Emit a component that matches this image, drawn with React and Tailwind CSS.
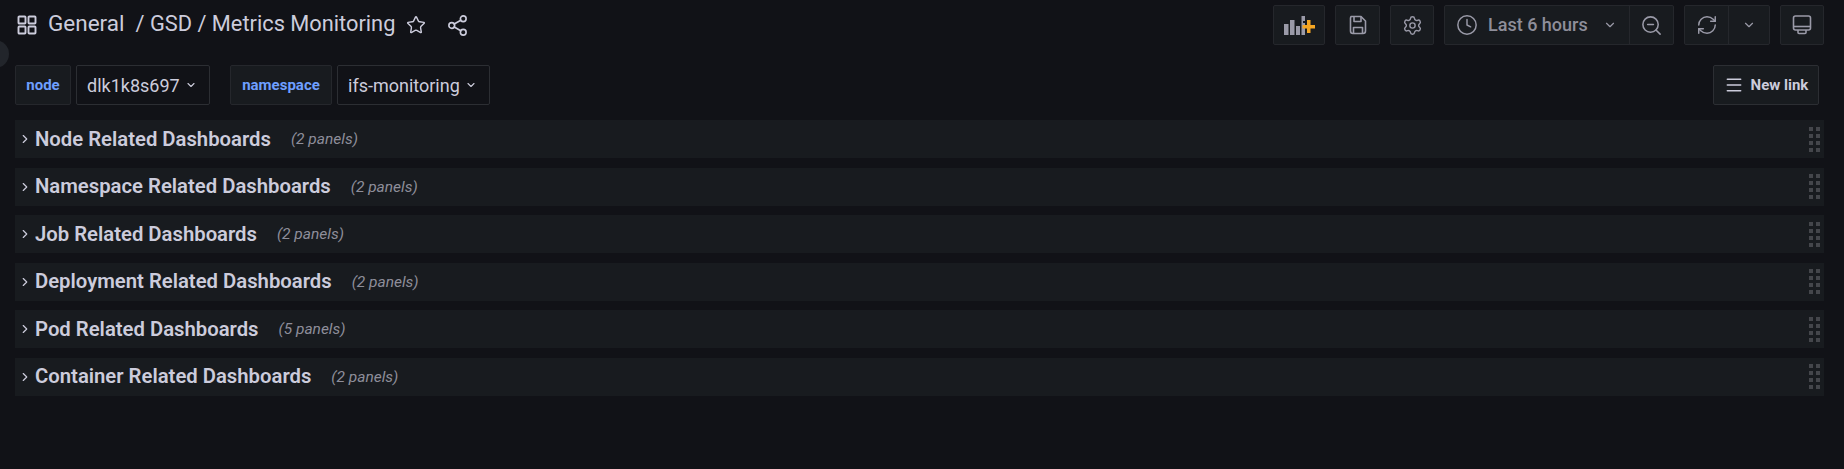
import React from 'react';
import { Star, Share2, Settings, Clock, ChevronDown, ChevronRight, ZoomOut, RefreshCw, Menu } from 'lucide-react';

const rows = [
  { title: 'Node Related Dashboards', panels: '(2 panels)' },
  { title: 'Namespace Related Dashboards', panels: '(2 panels)' },
  { title: 'Job Related Dashboards', panels: '(2 panels)' },
  { title: 'Deployment Related Dashboards', panels: '(2 panels)' },
  { title: 'Pod Related Dashboards', panels: '(5 panels)' },
  { title: 'Container Related Dashboards', panels: '(2 panels)' },
];

function GridIcon() {
  return (
    <svg width="20" height="20" viewBox="0 0 20 20" fill="none" stroke="#ccccdc" strokeWidth="1.9">
      <rect x="1.5" y="1.5" width="7" height="7" rx="0.8" />
      <rect x="11.5" y="1.5" width="7" height="7" rx="0.8" />
      <rect x="1.5" y="11.5" width="7" height="7" rx="0.8" />
      <rect x="11.5" y="11.5" width="7" height="7" rx="0.8" />
    </svg>
  );
}

function AddPanelIcon() {
  return (
    <svg width="31" height="20" viewBox="0 0 31 20">
      <rect x="0" y="9" width="4.5" height="11" fill="#9a9aa8" />
      <rect x="6" y="5" width="4.5" height="15" fill="#9a9aa8" />
      <rect x="12" y="11" width="4" height="9" fill="#9a9aa8" />
      <path d="M17.5 1h3.5v5h-2v2h2v12h-3.5z" fill="#9a9aa8" />
      <path d="M23 5h3.5v5H31v3.5h-4.5V18H23v-4.5h-4.5V10H23z" fill="#f5a623" />
    </svg>
  );
}

function SaveIcon() {
  return (
    <svg width="20" height="20" viewBox="0 0 20 20" fill="none" stroke="#9a9aa8" strokeWidth="1.6" strokeLinejoin="round">
      <path d="M3 1.5h10l4.5 4.5v10a2.5 2.5 0 0 1-2.5 2.5H5A2.5 2.5 0 0 1 2.5 16V3z" />
      <path d="M6 1.5v5h7v-5" />
      <path d="M5.5 18.5v-6h9v6" />
    </svg>
  );
}

function MonitorIcon() {
  return (
    <svg width="20" height="20" viewBox="0 0 20 20" fill="none" stroke="#9a9aa8" strokeWidth="1.6" strokeLinejoin="round">
      <rect x="1.5" y="1" width="17" height="14" rx="2" />
      <path d="M1.5 11.5h17" />
      <path d="M6 15v2.5a1 1 0 0 0 1 1h6a1 1 0 0 0 1-1V15" />
    </svg>
  );
}

function ToolButton({ className, children }) {
  return (
    <div className={`flex h-[40px] items-center justify-center rounded-[2px] border border-[#25272c] bg-[#181b1f] ${className}`}>
      {children}
    </div>
  );
}

function VariablePicker({ label, labelWidth, value, valueWidth }) {
  return (
    <div className="flex gap-[5px]">
      <div className={`flex h-[40px] items-center justify-center rounded-[2px] border border-[#25272c] bg-[#181b1f] text-[15px] font-bold text-[#6e9fff] ${labelWidth}`}>
        {label}
      </div>
      <div className={`flex h-[40px] items-center gap-[5px] rounded-[2px] border border-[#2c2e33] pl-[10px] text-[18px] text-[#ccccdc] ${valueWidth}`}>
        {value}
        <ChevronDown size={12} strokeWidth={2.2} color="#ccccdc" />
      </div>
    </div>
  );
}

function DragHandle() {
  return (
    <div className="grid grid-cols-2 gap-x-[3px] gap-y-[3px]">
      {Array.from({ length: 8 }).map((_, i) => (
        <div key={i} className="h-[4px] w-[4px] bg-[#44464b]" />
      ))}
    </div>
  );
}

export default function App() {
  return (
    <div className="relative h-[469px] w-full overflow-hidden bg-[#111217] pr-[20px] pl-[15px] font-['Roboto',sans-serif]">
      <div className="absolute top-[40px] left-[-19px] h-[28px] w-[28px] rounded-full bg-[#22252b]" />

      <div className="flex items-center justify-between pt-[5px]">
        <div className="flex items-center text-[#ccccdc]">
          <div className="ml-[2px]"><GridIcon /></div>
          <span className="ml-[11px] pb-[2px] text-[22.5px]">General</span>
          <span className="ml-[11px] pb-[2px] text-[21.8px]">/ GSD / Metrics Monitoring</span>
          <Star size={20} strokeWidth={1.7} color="#ccccdc" className="ml-[11px]" />
          <Share2 size={23} strokeWidth={1.7} color="#ccccdc" className="ml-[20px]" />
        </div>
        <div className="flex gap-[10px]">
          <ToolButton className="w-[52px]"><AddPanelIcon /></ToolButton>
          <ToolButton className="w-[45px]"><SaveIcon /></ToolButton>
          <ToolButton className="w-[44px]"><Settings size={21} strokeWidth={1.6} color="#9a9aa8" /></ToolButton>
          <div className="flex h-[40px] w-[230px] rounded-[2px] border border-[#25272c] bg-[#181b1f] text-[18px] font-medium text-[#8e8e9a]">
            <div className="flex w-[185px] items-center border-r border-[#25272c] pl-[11px]">
              <Clock size={22} strokeWidth={1.6} color="#9a9aa8" />
              <span className="ml-[10px] pb-[2px]">Last 6 hours</span>
              <ChevronDown size={14} strokeWidth={2} color="#9a9aa8" className="ml-[15px]" />
            </div>
            <div className="flex flex-1 items-center justify-center">
              <ZoomOut size={23} strokeWidth={1.6} color="#9a9aa8" />
            </div>
          </div>
          <div className="flex h-[40px] w-[86px] rounded-[2px] border border-[#25272c] bg-[#181b1f]">
            <div className="flex w-[44px] items-center justify-center border-r border-[#25272c]">
              <RefreshCw size={22} strokeWidth={1.6} color="#9a9aa8" />
            </div>
            <div className="flex flex-1 items-center justify-center">
              <ChevronDown size={14} strokeWidth={2} color="#9a9aa8" />
            </div>
          </div>
          <ToolButton className="w-[44px]"><MonitorIcon /></ToolButton>
        </div>
      </div>

      <div className="mt-[20px] flex items-center justify-between">
        <div className="flex gap-[20px]">
          <VariablePicker label="node" labelWidth="w-[56px]" value="dlk1k8s697" valueWidth="w-[134px]" />
          <VariablePicker label="namespace" labelWidth="w-[102px]" value="ifs-monitoring" valueWidth="w-[153px]" />
        </div>
        <div className="mr-[5px] flex h-[40px] w-[106px] items-center justify-center gap-[7px] rounded-[2px] border border-[#2c2e33] bg-[#181b1f] text-[15px] font-bold text-[#ccccdc]">
          <Menu size={20} strokeWidth={1.8} color="#ccccdc" />
          New link
        </div>
      </div>

      <div className="mt-[15px] flex flex-col gap-[9.5px]">
        {rows.map((row) => (
          <div key={row.title} className="flex h-[38px] items-center justify-between bg-[#181b1f] pr-[4px]">
            <div className="flex items-center">
              <ChevronRight size={14} strokeWidth={2} color="#ccccdc" className="ml-[3px]" />
              <span className="ml-[3px] text-[20.3px] font-semibold text-[#ccccdc]">{row.title}</span>
              <span className="ml-[20px] pt-[2px] text-[15.5px] text-[#8e8e9a] italic">{row.panels}</span>
            </div>
            <DragHandle />
          </div>
        ))}
      </div>
    </div>
  );
}
